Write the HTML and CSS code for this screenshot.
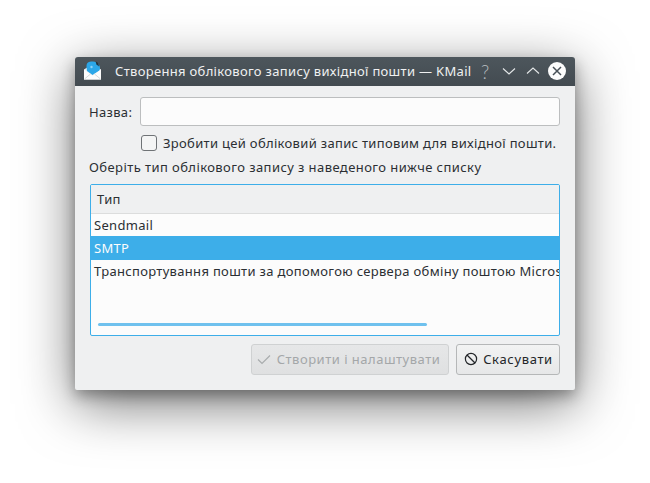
FILE: index.html
```html
<!DOCTYPE html>
<html lang="uk">
<head>
<meta charset="utf-8">
<title>KMail</title>
<link rel="stylesheet" href="styles.css">
</head>
<body>
<div class="window">
  <header class="titlebar">
    <svg class="app-icon" width="22" height="22" viewBox="0 0 22 22">
      <path d="M2 9.5 L10.5 4 L19 9.5 V19.5 H2 Z" fill="#e9eded"/>
      <path d="M4.5 7 Q4 2 9 1.6 Q14 0.8 16 3.5 Q19 7 17.5 10.5 L10.5 15 L5 11 Z" fill="#2ca7e8"/>
      <path d="M13.5 1.6 Q15.5 2 16.5 4 L17 6.5 L14.5 4.5 Z" fill="#26323a"/>
      <circle cx="9.5" cy="7" r="1.2" fill="#8fd2f5"/>
      <path d="M2 9.5 L10.5 15.5 L19 9.5 V19.5 H2 Z" fill="#fcfcfc"/>
      <path d="M2.5 19 L8.5 14 M18.5 19 L12.5 14" stroke="#d5dadb" stroke-width="1"/>
    </svg>
    <span class="title">Створення облікового запису вихідної пошти — KMail</span>
    <div class="win-buttons">
      <span class="win-btn help">?</span>
      <span class="win-btn"><svg width="14" height="14" viewBox="0 0 14 14"><path d="M1 4.5 L7 10 L13 4.5" fill="none" stroke="#e4e7e8" stroke-width="1.1"/></svg></span>
      <span class="win-btn"><svg width="14" height="14" viewBox="0 0 14 14"><path d="M1 9.5 L7 4 L13 9.5" fill="none" stroke="#e4e7e8" stroke-width="1.1"/></svg></span>
      <span class="win-btn"><svg width="18" height="18" viewBox="0 0 18 18"><circle cx="9" cy="9" r="9" fill="#fcfcfc"/><path d="M5 5 L13 13 M13 5 L5 13" stroke="#475057" stroke-width="1.5"/></svg></span>
    </div>
  </header>
  <main class="content">
    <div class="name-row">
      <label class="name-label">Назва:</label>
      <div class="input"></div>
    </div>
    <div class="check-row">
      <span class="checkbox"></span>
      <span>Зробити цей обліковий запис типовим для вихідної пошти.</span>
    </div>
    <p class="hint">Оберіть тип облікового запису з наведеного нижче списку</p>
    <div class="list">
      <div class="list-head">Тип</div>
      <div class="list-body">
        <div class="row row-first">Sendmail</div>
        <div class="row row-selected">SMTP</div>
        <div class="row">Транспортування пошти за допомогою сервера обміну поштою Microsoft Exchange</div>
        <div class="scrollbar"></div>
      </div>
    </div>
    <div class="actions">
      <div class="btn btn-disabled">
        <svg width="16" height="16" viewBox="0 0 16 16"><path d="M2 8.5 L6 12.5 L14 4.5" fill="none" stroke="#a9acae" stroke-width="1.2"/></svg>
        <span>Створити і налаштувати</span>
      </div>
      <div class="btn btn-cancel">
        <svg width="16" height="16" viewBox="0 0 16 16"><circle cx="8" cy="8" r="5.6" fill="none" stroke="#232629" stroke-width="1.2"/><path d="M4 4 L12 12" stroke="#232629" stroke-width="1.2"/></svg>
        <span>Скасувати</span>
      </div>
    </div>
  </main>
</div>
</body>
</html>
```
FILE: styles.css
```css
* { box-sizing: border-box; }
html, body { margin: 0; height: 100%; background: #fff; overflow: hidden; }
body {
  padding: 57px 75px 0;
  font-family: "Noto Sans", sans-serif;
  font-size: 13px;
  letter-spacing: .32px;
  color: #2b2f33;
}
.window {
  width: 500px;
  height: 333px;
  border-radius: 4px 4px 2px 2px;
  background: #eff0f1;
  box-shadow: 0 6px 14px rgba(0,0,0,.3), 0 14px 54px rgba(0,0,0,.55);
  display: flex;
  flex-direction: column;
}
.titlebar {
  height: 29px;
  flex: none;
  display: flex;
  align-items: center;
  padding: 0 6px 1px 7px;
  border-radius: 3px 3px 0 0;
  background: linear-gradient(#4d565c, #434b51);
  color: #eff0f1;
}
.app-icon { flex: none; }
.title { margin-left: 11px; white-space: nowrap; }
.win-buttons { margin-left: auto; display: flex; align-items: center; }
.win-btn { width: 24px; height: 20px; display: flex; align-items: center; justify-content: center; }
.help { font-family: "Lato", sans-serif; font-size: 19px; font-weight: 300; color: #b5babd; letter-spacing: 0; }
.content {
  flex: 1;
  padding: 11px 15px 15px;
  display: flex;
  flex-direction: column;
}
.name-row { display: flex; align-items: center; height: 29px; }
.name-label { margin-left: -1px; width: 51px; flex: none; }
.input {
  width: 420px;
  height: 29px;
  background: #fcfcfc;
  border: 1px solid #bcbebf;
  border-radius: 3px;
}
.check-row {
  display: flex;
  align-items: center;
  gap: 6px;
  margin: 9px 0 0 51px;
  height: 16px;
  white-space: nowrap;
}
.checkbox {
  width: 16px;
  height: 16px;
  flex: none;
  background: #f4f5f5;
  border: 1px solid #6f7376;
  border-radius: 3px;
}
.hint { margin: 8px 0 0 -1px; height: 17px; line-height: 17px; white-space: nowrap; letter-spacing: .42px; }
.list {
  margin-top: 8px;
  width: 470px;
  height: 152px;
  border: 1px solid #3daee9;
  border-radius: 2px;
  background: #fcfcfc;
  overflow: hidden;
}
.list-head {
  height: 29px;
  padding-left: 6px;
  line-height: 28px;
  background: #eff0f1;
  border-bottom: 1px solid #dcdddd;
}
.list-body { position: relative; height: 121px; }
.row {
  height: 23px;
  line-height: 23px;
  padding-left: 3px;
  white-space: nowrap;
  overflow: hidden;
}
.row-first { height: 22px; line-height: 22px; }
.row-selected { height: 24px; line-height: 24px; background: #3daee9; color: #fcfcfc; }
.scrollbar {
  position: absolute;
  left: 7px;
  top: 109px;
  width: 329px;
  height: 3px;
  background: #6fc1ee;
  border-radius: 2px;
}
.actions { margin-top: 8px; display: flex; justify-content: flex-end; gap: 7px; }
.btn {
  height: 31px;
  display: flex;
  align-items: center;
  justify-content: center;
  gap: 4px;
  padding-bottom: 1px;
  border-radius: 3px;
  border: 1px solid #b5b7b8;
  background: linear-gradient(#f2f3f3, #e6e7e8);
  white-space: nowrap;
}
.btn-disabled {
  width: 198px;
  gap: 5px;
  padding-right: 4px;
  color: #a4a7a9;
  letter-spacing: .5px;
  border-color: #cfd1d2;
  background: linear-gradient(#e6e7e8, #dfe0e1);
}
.btn-cancel { width: 104px; color: #232629; letter-spacing: .66px; }
```
